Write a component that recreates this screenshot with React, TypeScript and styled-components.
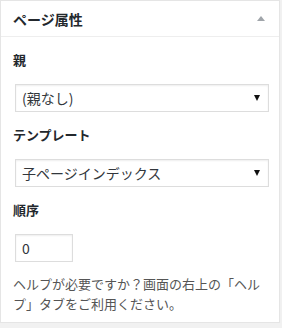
import React from 'react';
import styled, { createGlobalStyle } from 'styled-components';

const GlobalStyle = createGlobalStyle`
  html, body {
    margin: 0;
    padding: 0;
    background: #f1f1f1;
  }
  body {
    font-family: "Noto Sans CJK JP", "Noto Sans", sans-serif;
    color: #444;
  }
`;

const Postbox = styled.div`
  width: 280px;
  box-sizing: border-box;
  background: #fff;
  border: 1px solid #e5e5e5;
  box-shadow: 0 1px 1px rgba(0, 0, 0, 0.04);
`;

const Header = styled.div`
  height: 35px;
  display: flex;
  align-items: center;
  justify-content: space-between;
  padding: 0 14px 0 12px;
  border-bottom: 1px solid #eee;
`;

const Title = styled.h2`
  margin: 0;
  font-size: 14px;
  font-weight: 600;
  color: #23282d;
  line-height: 1;
`;

const Toggle = styled.span`
  width: 0;
  height: 0;
  border-left: 4px solid transparent;
  border-right: 4px solid transparent;
  border-bottom: 5px solid #a0a5aa;
`;

const Inside = styled.div`
  padding: 0 12px 9px;
`;

const Label = styled.p`
  margin: 13px 0 14px;
  font-size: 13px;
  line-height: 20px;
  font-weight: 600;
  color: #23282d;
`;

const SelectWrap = styled.div`
  position: relative;
  width: 254px;
  margin-left: 2px;

  &::after {
    content: '';
    position: absolute;
    right: 9px;
    top: 11px;
    border-left: 3.5px solid transparent;
    border-right: 3.5px solid transparent;
    border-top: 6px solid #111;
    pointer-events: none;
  }
`;

const Select = styled.select`
  appearance: none;
  display: block;
  width: 100%;
  height: 28px;
  box-sizing: border-box;
  margin: 0;
  padding: 0 24px 0 6px;
  border: 1px solid #ddd;
  border-radius: 0;
  background: #fff;
  box-shadow: inset 0 1px 2px rgba(0, 0, 0, 0.07);
  font-family: inherit;
  font-size: 14px;
  color: #32373c;
  outline: none;
`;

const NumberInput = styled.input`
  display: block;
  width: 58px;
  height: 28px;
  box-sizing: border-box;
  margin: 0 0 0 2px;
  padding: 0 6px;
  border: 1px solid #ddd;
  box-shadow: inset 0 1px 2px rgba(0, 0, 0, 0.07);
  font-family: inherit;
  font-size: 14px;
  color: #32373c;
  outline: none;
`;

const Help = styled.p`
  margin: 12px 0 0;
  font-size: 13px;
  line-height: 19.5px;
  color: #555;
`;

export default function App() {
  return (
    <>
      <GlobalStyle />
      <Postbox>
        <Header>
          <Title>ページ属性</Title>
          <Toggle />
        </Header>
        <Inside>
          <Label>親</Label>
          <SelectWrap>
            <Select defaultValue="">
              <option value="">(親なし)</option>
            </Select>
          </SelectWrap>
          <Label>テンプレート</Label>
          <SelectWrap>
            <Select defaultValue="child">
              <option value="child">子ページインデックス</option>
            </Select>
          </SelectWrap>
          <Label>順序</Label>
          <NumberInput type="text" defaultValue="0" />
          <Help>ヘルプが必要ですか？画面の右上の「ヘルプ」タブをご利用ください。</Help>
        </Inside>
      </Postbox>
    </>
  );
}
